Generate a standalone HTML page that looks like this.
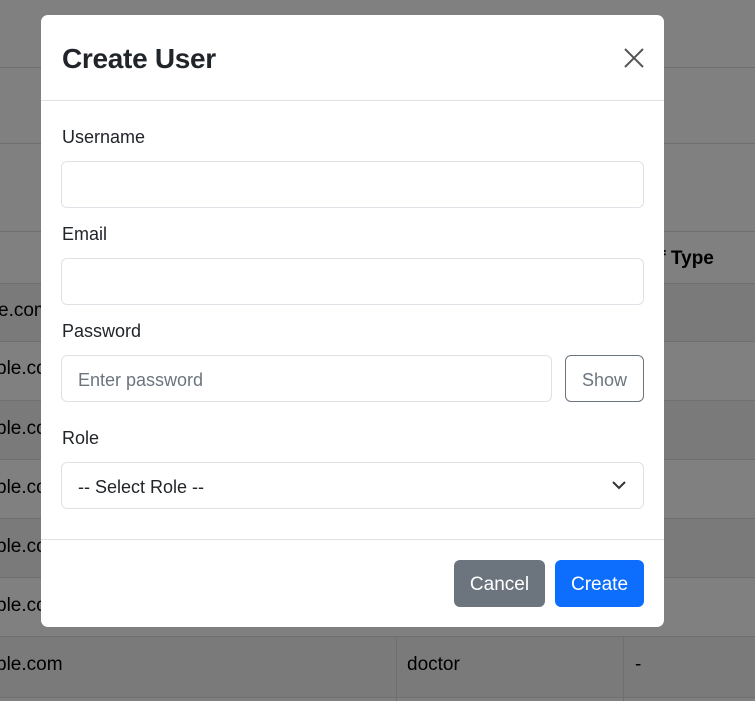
<!DOCTYPE html>
<html><head><style>
*{box-sizing:border-box;margin:0;padding:0}
body{width:755px;height:701px;overflow:hidden;background:#808080;font-family:"Liberation Sans",sans-serif;position:relative;color:#212529}
.hl{position:absolute;left:0;width:755px;height:1px;background:#6f6f6f}
.stripe{position:absolute;left:0;width:755px;background:#7a7a7a}
.bg{position:absolute;font-size:19px;color:#000}
.vl{position:absolute;width:1px;background:#6f6f6f;top:636px;height:65px}
.modal{position:absolute;left:41px;top:15px;width:623px;height:612px;background:#fff;border-radius:7px}
.hdr{height:86px;border-bottom:1px solid #dee2e6;position:relative}
.hdr h1{position:absolute;left:21px;top:28px;font-size:28px;font-weight:bold;letter-spacing:-.3px}
.lbl{position:absolute;left:21px;font-size:18px}
.inp{position:absolute;left:20px;width:583px;height:47px;border:1px solid #dee2e6;border-radius:6px;font-size:18px;color:#6c757d;padding:14px 16px}
.btn{position:absolute;top:545px;height:47px;border-radius:6px;color:#fff;font-size:19px;text-align:center;line-height:50px}
</style></head><body>
<div class="stripe" style="top:283px;height:58px"></div>
<div class="stripe" style="top:400px;height:59px"></div>
<div class="stripe" style="top:518px;height:59px"></div>
<div class="stripe" style="top:636px;height:61px"></div>
<div class="hl" style="top:67px"></div><div class="hl" style="top:143px"></div><div class="hl" style="top:231px"></div><div class="hl" style="top:283px"></div><div class="hl" style="top:341px"></div><div class="hl" style="top:400px"></div><div class="hl" style="top:459px"></div><div class="hl" style="top:518px"></div><div class="hl" style="top:577px"></div><div class="hl" style="top:636px"></div><div class="hl" style="top:697px"></div>
<div class="vl" style="left:396px"></div><div class="vl" style="left:623px"></div>
<div class="bg" style="left:653px;top:248px;font-weight:bold">ff Type</div>
<div class="bg" style="left:-2px;top:300px">e.com</div>
<div class="bg" style="left:-4px;top:358px">ple.com</div>
<div class="bg" style="left:-4px;top:418px">ple.com</div>
<div class="bg" style="left:-4px;top:477px">ple.com</div>
<div class="bg" style="left:-4px;top:536px">ple.com</div>
<div class="bg" style="left:-4px;top:595px">ple.com</div>
<div class="bg" style="left:-4px;top:654px">ple.com</div>
<div class="bg" style="left:407px;top:654px">doctor</div>
<div class="bg" style="left:635px;top:654px">-</div>
<div class="modal">
<div class="hdr"><h1>Create User</h1>
<svg style="position:absolute;left:583px;top:33px" width="20" height="20" viewBox="0 0 20 20"><path d="M1 1L19 19M19 1L1 19" stroke="#555" stroke-width="2"/></svg></div>
<div class="lbl" style="top:112px">Username</div>
<div class="inp" style="top:146px"></div>
<div class="lbl" style="top:209px">Email</div>
<div class="inp" style="top:243px"></div>
<div class="lbl" style="top:306px">Password</div>
<div class="inp" style="top:340px;width:491px">Enter password</div>
<div class="inp" style="top:340px;left:524px;width:79px;border-color:#6c757d;padding:14px 0;text-align:center">Show</div>
<div class="lbl" style="top:413px">Role</div>
<div class="inp" style="top:447px;color:#212529">-- Select Role --
<svg style="position:absolute;right:17px;top:17px" width="14" height="10" viewBox="0 0 14 10"><path d="M1 2L7 8L13 2" stroke="#333" stroke-width="2" fill="none"/></svg></div>
<div style="position:absolute;top:524px;left:0;width:623px;height:1px;background:#dee2e6"></div>
<div class="btn" style="left:413px;width:91px;background:#6c757d">Cancel</div>
<div class="btn" style="left:514px;width:89px;background:#0d6efd">Create</div>
</div>
</body></html>
